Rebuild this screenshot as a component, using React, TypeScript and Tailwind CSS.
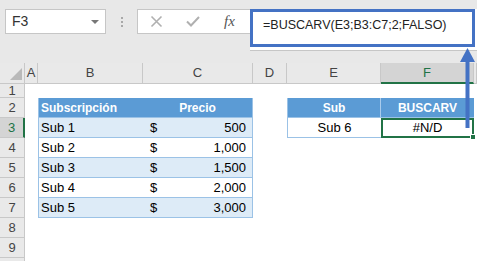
import React from 'react';

const headCell = 'flex items-center justify-center border-r border-b border-[#c8c8c8] text-[13px] text-[#444]';
const rowHead = 'flex items-center justify-center border-r border-b border-[#c8c8c8] text-[13px] text-[#444] bg-[#e9e9e9]';
const blueHead = 'flex items-center bg-[#5b9bd5] text-[12px] font-bold text-white';

type Row = { name: string; price: string };
const rows: Row[] = [
  { name: 'Sub 1', price: '500' },
  { name: 'Sub 2', price: '1,000' },
  { name: 'Sub 3', price: '1,500' },
  { name: 'Sub 4', price: '2,000' },
  { name: 'Sub 5', price: '3,000' },
];

export default function App() {
  return (
    <div
      className="relative w-[477px] h-[261px] overflow-hidden bg-white"
      style={{ fontFamily: '"Liberation Sans", Arial, sans-serif' }}
    >
      {/* formula bar */}
      <div className="flex items-start h-[63px] bg-[#e8e8e8] pt-[9px] pl-[5px]">
        <div className="flex items-center justify-between w-[101px] h-[25px] bg-white border border-[#c6c6c6] pl-[6px] pr-[6px]">
          <span className="text-[14px] text-[#333]">F3</span>
          <span className="w-0 h-0 border-l-[4px] border-r-[4px] border-t-[4px] border-l-transparent border-r-transparent border-t-[#777]" />
        </div>
        <div className="flex flex-col items-center justify-center gap-[2px] w-[31px] h-[25px]">
          <span className="w-[2px] h-[2px] bg-[#a8a8a8]" />
          <span className="w-[2px] h-[2px] bg-[#a8a8a8]" />
          <span className="w-[2px] h-[2px] bg-[#a8a8a8]" />
        </div>
        <div className="flex items-center w-[113px] h-[25px] bg-white border border-r-0 border-[#c6c6c6]">
          <svg width="13" height="13" viewBox="0 0 13 13" className="ml-[12px]">
            <path d="M1.5 1.5 L11.5 11.5 M11.5 1.5 L1.5 11.5" stroke="#b0b0b0" strokeWidth="1.6" fill="none" />
          </svg>
          <svg width="14" height="11" viewBox="0 0 14 11" className="ml-[23px]">
            <path d="M1 5.5 L5 9.5 L13 1" stroke="#b0b0b0" strokeWidth="2" fill="none" />
          </svg>
          <span
            className="ml-[24px] text-[15px] italic text-[#555]"
            style={{ fontFamily: '"Liberation Serif", "Times New Roman", serif' }}
          >
            fx
          </span>
        </div>
        <div className="w-[227px] h-[42px] bg-white border-b border-[#c6c6c6]">
          <div className="w-[225px] h-[38px] border-[3px] border-[#4472c4] pl-[10px] pt-[4px] text-[12.5px] text-[#222]">
            =BUSCARV(E3;B3:C7;2;FALSO)
          </div>
        </div>
      </div>

      {/* sheet */}
      <div className="grid grid-cols-[25px_13px_105px_110px_34px_94px_93px_1fr] grid-rows-[21px_14px_repeat(9,20px)]">
        {/* column headers */}
        <div className={`${headCell} relative bg-[#e9e9e9]`}>
          <span className="absolute right-[2px] bottom-[3px] w-0 h-0 border-l-[12px] border-b-[12px] border-l-transparent border-b-[#b9b9b9]" />
        </div>
        <div className={`${headCell} bg-[#e9e9e9]`}>A</div>
        <div className={`${headCell} bg-[#e9e9e9]`}>B</div>
        <div className={`${headCell} bg-[#e9e9e9]`}>C</div>
        <div className={`${headCell} bg-[#e9e9e9]`}>D</div>
        <div className={`${headCell} bg-[#e9e9e9]`}>E</div>
        <div className="flex items-center justify-center border-r border-[#c8c8c8] border-b-2 border-b-[#217346] bg-[#d4d4d4] text-[13px] text-[#217346]">F</div>
        <div className={`${headCell} bg-[#e9e9e9]`} />

        {/* row 1 */}
        <div className={rowHead}>1</div>
        <div className="col-span-7" />

        {/* row 2: table headers */}
        <div className={rowHead}>2</div>
        <div />
        <div className={`${blueHead} pl-[2px] border-l border-b border-[#9bc2e6]`}>Subscripción</div>
        <div className={`${blueHead} justify-center border-r border-b border-[#9bc2e6]`}>Precio</div>
        <div />
        <div className={`${blueHead} justify-center border-l border-r border-b border-l-[#9bc2e6] border-r-[#a9cbec] border-b-[#9bc2e6]`}>
          Sub
        </div>
        <div className={`${blueHead} justify-center border-b border-[#9bc2e6]`}>BUSCARV</div>
        <div />

        {rows.map((r, i) => {
          const fill = i % 2 === 0 ? 'bg-[#ddebf7]' : 'bg-white';
          const n = i + 3;
          const sel = n === 3;
          return (
            <React.Fragment key={r.name}>
              <div
                className={
                  sel
                    ? 'flex items-center justify-center border-b border-[#c8c8c8] border-r-2 border-r-[#217346] bg-[#d4d4d4] text-[13px] text-[#217346]'
                    : rowHead
                }
              >
                {n}
              </div>
              <div />
              <div className={`flex items-center pl-[2px] border-l border-b border-[#9bc2e6] text-[13px] text-black ${fill}`}>
                {r.name}
              </div>
              <div className={`flex items-center justify-between pl-[7px] pr-[6px] border-r border-b border-[#9bc2e6] text-[13px] text-black ${fill}`}>
                <span>$</span>
                <span>{r.price}</span>
              </div>
              <div />
              {sel ? (
                <>
                  <div className="flex items-center justify-center border-l border-b border-[#9bc2e6] text-[13px] text-black">
                    Sub 6
                  </div>
                  <div className="relative flex items-center justify-center border-2 border-[#217346] text-[13px] text-black">
                    #N/D
                    <span className="absolute -right-[4px] -bottom-[4px] w-[6px] h-[6px] bg-[#217346] border border-white" />
                  </div>
                  <div />
                </>
              ) : (
                <>
                  <div />
                  <div />
                  <div />
                </>
              )}
            </React.Fragment>
          );
        })}

        {[8, 9].map((n) => (
          <React.Fragment key={n}>
            <div className={rowHead}>{n}</div>
            <div className="col-span-7" />
          </React.Fragment>
        ))}
        <div className={rowHead} />
        <div className="col-span-7" />
      </div>

      {/* annotation arrow */}
      <svg className="absolute left-0 top-0 pointer-events-none" width="477" height="261">
        <rect x="465.5" y="60" width="4" height="68" fill="#4472c4" />
        <polygon points="467.5,48 475,62 460,62" fill="#4472c4" />
      </svg>
    </div>
  );
}
